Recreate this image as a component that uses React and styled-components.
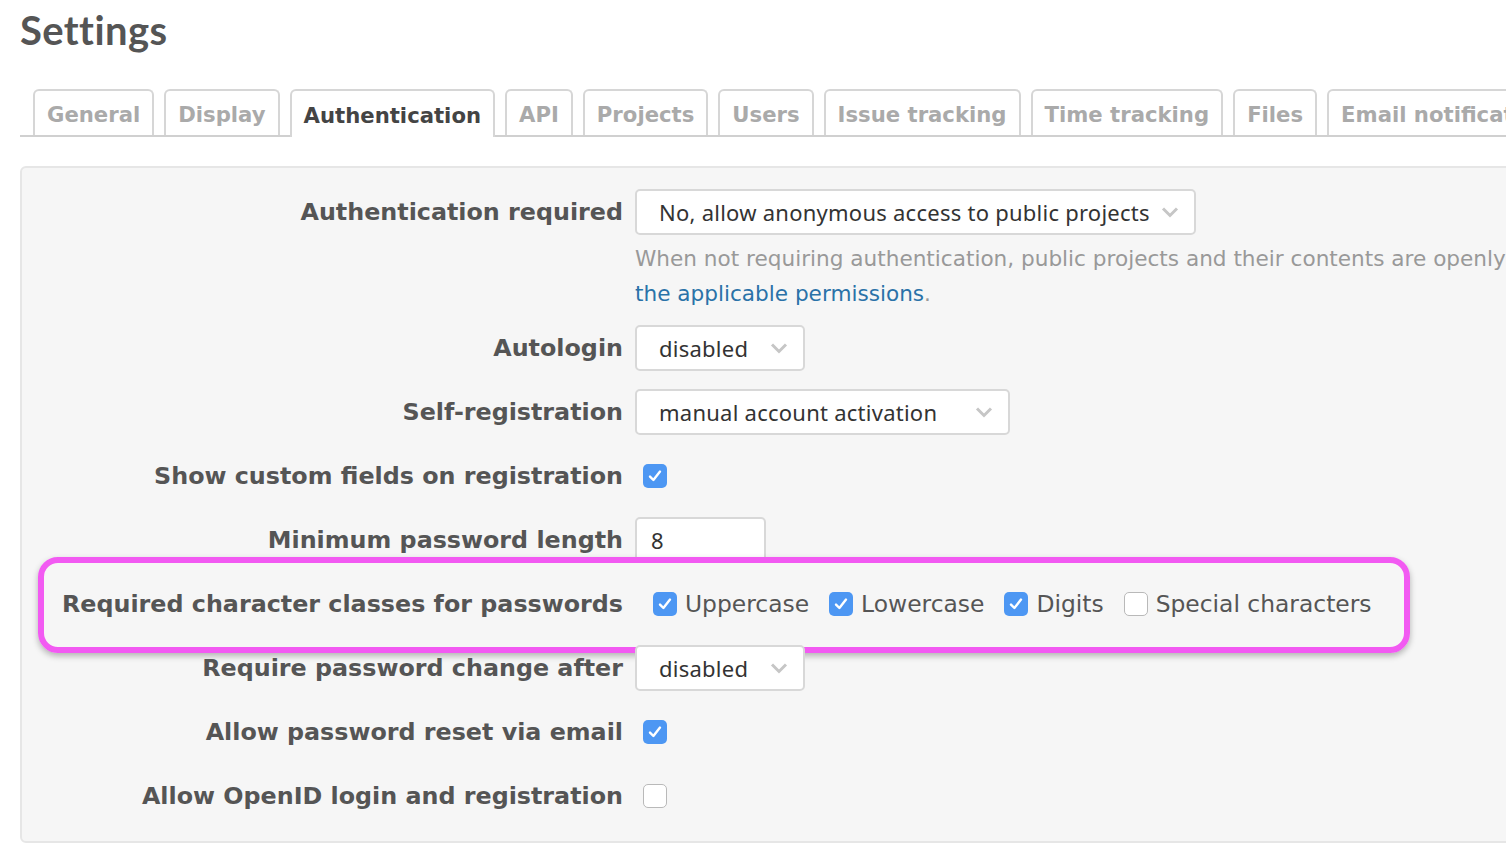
import React from "react";
import styled, { createGlobalStyle } from "styled-components";

const GlobalStyle = createGlobalStyle`
  html, body {
    margin: 0;
    padding: 0;
    background: #fff;
    overflow: hidden;
  }
  body {
    font-family: "DejaVu Sans", Verdana, sans-serif;
    color: #333;
  }
`;

const Page = styled.div`
  width: 1506px;
  height: 854px;
  padding: 0 0 0 20px;
  box-sizing: border-box;
  overflow: hidden;
`;

const Title = styled.h2`
  margin: 0;
  padding-top: 6px;
  font-family: "Lato", "Open Sans", sans-serif;
  font-weight: 700;
  font-size: 40px;
  line-height: 48px;
  color: #555;
  letter-spacing: 0.4px;
`;

const Tabs = styled.div`
  display: flex;
  gap: 10px;
  margin-top: 35px;
  padding-left: 13px;
  border-bottom: 2px solid #d0d0d0;
  height: 46px;
  width: 1600px;
`;

const Tab = styled.div`
  flex: none;
  box-sizing: border-box;
  height: ${(p) => (p.$active ? "48px" : "46px")};
  padding: 2px 12px 0;
  display: flex;
  align-items: center;
  border: 2px solid #d6d6d6;
  border-bottom: none;
  border-radius: 6px 6px 0 0;
  background: #fff;
  font-weight: bold;
  font-size: 21.2px;
  color: ${(p) => (p.$active ? "#444" : "#aaa")};
`;

const Box = styled.div`
  margin-top: 29px;
  width: 1600px;
  box-sizing: border-box;
  background: #f6f6f6;
  border: 2px solid #e6e6e6;
  border-radius: 6px;
  padding: 21px 0 22px;
`;

const Row = styled.div`
  position: relative;
  display: flex;
  align-items: flex-start;
  margin-bottom: ${(p) => p.$mb ?? 18}px;
  &:last-child {
    margin-bottom: 0;
  }
`;

const Highlight = styled.div`
  position: absolute;
  left: 16px;
  top: -24px;
  width: 1372px;
  height: 96px;
  box-sizing: border-box;
  border: 6px solid #f25af2;
  border-radius: 20px;
  box-shadow: 0 3px 6px rgba(0, 0, 0, 0.28);
  pointer-events: none;
`;

const Label = styled.label`
  flex: none;
  width: 613px;
  padding-right: 12px;
  box-sizing: border-box;
  text-align: right;
  font-weight: bold;
  font-size: 23.8px;
  line-height: 46px;
  color: #555;
  white-space: nowrap;
`;

const Field = styled.div`
  display: flex;
  flex-direction: column;
`;

const Line = styled.div`
  display: flex;
  align-items: center;
  height: 46px;
  padding-left: ${(p) => p.$pad ?? 0}px;
`;

const Select = styled.div`
  box-sizing: border-box;
  width: ${(p) => p.$w}px;
  height: 46px;
  display: flex;
  align-items: center;
  justify-content: space-between;
  padding: 0 14px 0 22px;
  background: #fff;
  border: 2px solid #d8d8d8;
  border-radius: 5px;
  font-family: "Noto Sans", "Open Sans", sans-serif;
  font-size: 22px;
  letter-spacing: 0.25px;
  color: #333;
  white-space: nowrap;
`;

const Input = styled.div`
  box-sizing: border-box;
  width: 131px;
  height: 46px;
  padding: 6px 14px 0;
  background: #fff;
  border: 2px solid #d8d8d8;
  border-radius: 5px;
  font-family: "Noto Sans", "Open Sans", sans-serif;
  font-size: 22px;
  color: #333;
`;

const Desc = styled.div`
  margin: 6px 0 14px;
  font-family: "DejaVu Sans", Verdana, sans-serif;
  font-size: 21.6px;
  line-height: 35px;
  color: #999;
  white-space: nowrap;
`;

const Link = styled.a`
  color: #2a72a8;
  text-decoration: none;
`;

const Box24 = styled.span`
  flex: none;
  box-sizing: border-box;
  width: 24px;
  height: 24px;
  border-radius: 5px;
  display: inline-flex;
  align-items: center;
  justify-content: center;
  background: ${(p) => (p.$on ? "#4d97f3" : "#fff")};
  border: ${(p) => (p.$on ? "none" : "1.5px solid #b9b9b9")};
`;

const Option = styled.span`
  display: inline-flex;
  align-items: center;
  gap: 8px;
  margin-right: 20px;
  font-size: 23.4px;
  color: #555;
`;

const Chevron = () => (
  <svg width="20" height="12" viewBox="0 0 20 12">
    <path d="M3 2.5 L10 9.5 L17 2.5" fill="none" stroke="#c6c6c6" strokeWidth="3" />
  </svg>
);

const Check = ({ on }) => (
  <Box24 $on={on}>
    {on && (
      <svg width="16" height="16" viewBox="0 0 16 16">
        <path
          d="M3 8.6 L6.4 12 L13 3.6"
          fill="none"
          stroke="#fff"
          strokeWidth="2.4"
          strokeLinecap="round"
          strokeLinejoin="round"
        />
      </svg>
    )}
  </Box24>
);

const tabs = [
  "General",
  "Display",
  "Authentication",
  "API",
  "Projects",
  "Users",
  "Issue tracking",
  "Time tracking",
  "Files",
  "Email notifications",
];

export default function App() {
  return (
    <Page>
      <GlobalStyle />
      <Title>Settings</Title>
      <Tabs>
        {tabs.map((t) => (
          <Tab key={t} $active={t === "Authentication"}>
            {t}
          </Tab>
        ))}
      </Tabs>
      <Box>
        <Row $mb={0}>
          <Label>Authentication required</Label>
          <Field>
            <Select $w={561}>
              No, allow anonymous access to public projects
              <Chevron />
            </Select>
            <Desc>
              When not requiring authentication, public projects and their contents are openly
              available on the network. You can <br />
              <Link href="#">the applicable permissions</Link>.
            </Desc>
          </Field>
        </Row>
        <Row>
          <Label>Autologin</Label>
          <Select $w={170}>
            disabled
            <Chevron />
          </Select>
        </Row>
        <Row>
          <Label>Self-registration</Label>
          <Select $w={375}>
            manual account activation
            <Chevron />
          </Select>
        </Row>
        <Row>
          <Label>Show custom fields on registration</Label>
          <Line $pad={8}>
            <Check on />
          </Line>
        </Row>
        <Row>
          <Label>Minimum password length</Label>
          <Input>8</Input>
        </Row>
        <Row>
          <Highlight />
          <Label>Required character classes for passwords</Label>
          <Line $pad={18}>
            <Option>
              <Check on />
              Uppercase
            </Option>
            <Option>
              <Check on />
              Lowercase
            </Option>
            <Option>
              <Check on />
              Digits
            </Option>
            <Option>
              <Check />
              Special characters
            </Option>
          </Line>
        </Row>
        <Row>
          <Label>Require password change after</Label>
          <Select $w={170}>
            disabled
            <Chevron />
          </Select>
        </Row>
        <Row>
          <Label>Allow password reset via email</Label>
          <Line $pad={8}>
            <Check on />
          </Line>
        </Row>
        <Row>
          <Label>Allow OpenID login and registration</Label>
          <Line $pad={8}>
            <Check />
          </Line>
        </Row>
      </Box>
    </Page>
  );
}
